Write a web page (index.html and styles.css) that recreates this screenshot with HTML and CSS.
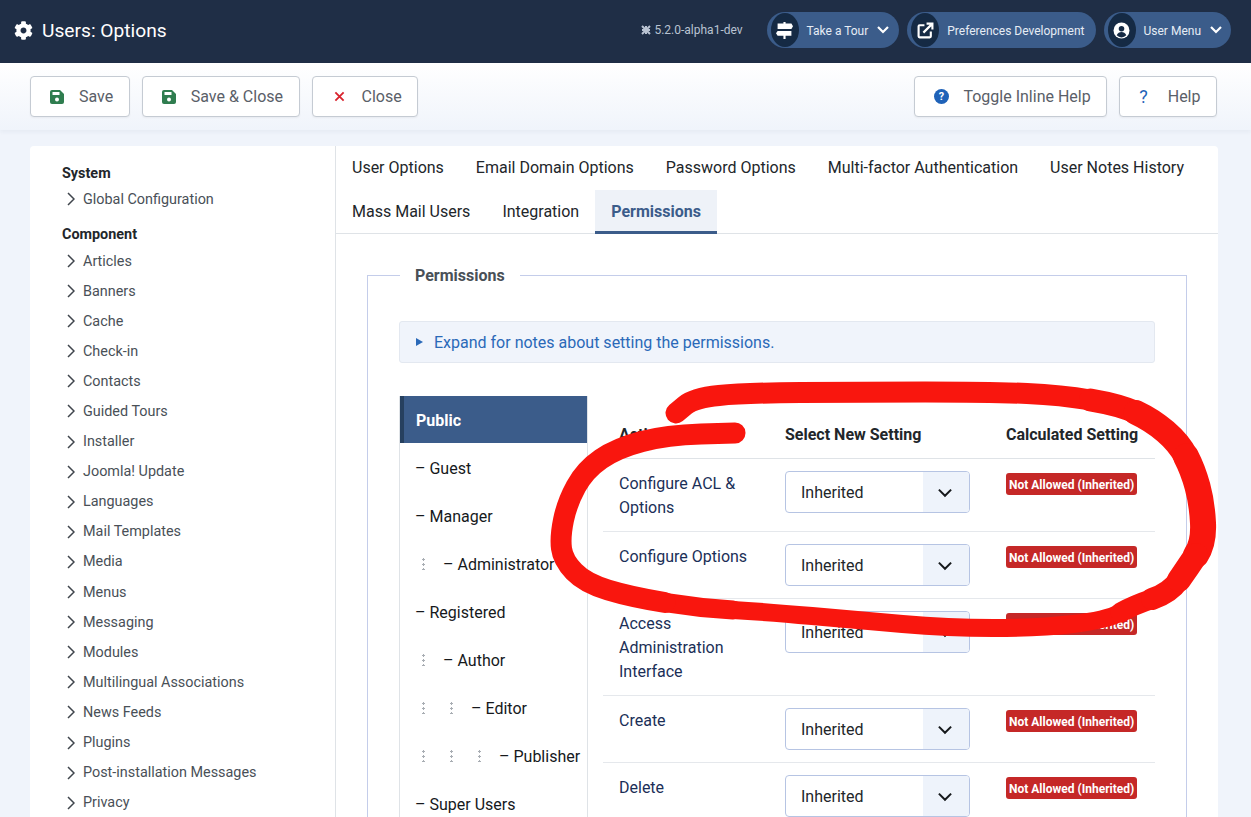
FILE: index.html
```html
<!DOCTYPE html>
<html lang="en">
<head>
<meta charset="utf-8">
<title>Users: Options</title>
<link rel="stylesheet" href="styles.css">
</head>
<body>
<header class="header">
  <div class="brand">
    <svg class="gear" viewBox="0 0 512 512"><path d="M487.4 315.7l-42.6-24.6c4.3-23.2 4.3-47 0-70.2l42.6-24.6c4.9-2.8 7.1-8.6 5.5-14-11.1-35.6-30-67.8-54.7-94.6-3.8-4.1-10-5.1-14.8-2.3L380.8 110c-17.9-15.4-38.5-27.3-60.8-35.1V25.8c0-5.6-3.9-10.5-9.4-11.7-36.7-8.2-74.3-7.8-109.2 0-5.5 1.2-9.4 6.1-9.4 11.7V75c-22.2 7.9-42.8 19.8-60.8 35.1L88.7 85.5c-4.9-2.8-11-1.9-14.8 2.3-24.7 26.7-43.6 58.9-54.7 94.6-1.7 5.4.6 11.2 5.5 14L67.3 221c-4.3 23.2-4.3 47 0 70.2l-42.6 24.6c-4.9 2.8-7.1 8.6-5.5 14 11.1 35.6 30 67.8 54.7 94.6 3.8 4.1 10 5.1 14.8 2.3l42.6-24.6c17.9 15.4 38.5 27.3 60.8 35.1v49.2c0 5.6 3.9 10.5 9.4 11.7 36.7 8.2 74.3 7.8 109.2 0 5.5-1.2 9.4-6.1 9.4-11.7v-49.2c22.2-7.9 42.8-19.8 60.8-35.1l42.6 24.6c4.9 2.8 11 1.9 14.8-2.3 24.7-26.7 43.6-58.9 54.7-94.6 1.5-5.5-.7-11.3-5.6-14.1zM256 336c-44.1 0-80-35.9-80-80s35.9-80 80-80 80 35.9 80 80-35.9 80-80 80z"/></svg>
    <span class="brand-title">Users: Options</span>
  </div>
  <div class="header-right">
    <span class="version">
      <svg class="jlogo" viewBox="0 0 12 12"><path d="M2 2l8 8M10 2l-8 8M2 6h8M6 2v8" stroke="#b9c3d2" stroke-width="2" fill="none"/></svg>5.2.0-alpha1-dev
    </span>
    <div class="pill">
      <span class="pill-icon"><svg viewBox="0 0 16 16" class="pi"><path d="M7 0h2v1.500h5.500l1.500 2.500-1.500 2.500H1.500V1.500H7zM1.500 8.500H14.500v4.500H9v3H7v-3H1.500L0 10.700z" fill="#fff"/></svg></span>
      <span class="pill-text">Take a Tour</span>
      <svg class="pill-chev" viewBox="0 0 14 10"><path d="M2 2l5 5 5-5" stroke="#fff" stroke-width="2.200" fill="none"/></svg>
    </div>
    <div class="pill pill-plain">
      <span class="pill-icon"><svg viewBox="0 0 16 16" class="pi"><path d="M7 3H2.500A1 1 0 0 0 1.500 4v9.500a1 1 0 0 0 1 1H12a1 1 0 0 0 1-1V9" stroke="#fff" stroke-width="2" fill="none"/><path d="M6 10l8-8M9 1.500h5.500V7" stroke="#fff" stroke-width="2" fill="none"/></svg></span>
      <span class="pill-text">Preferences Development</span>
    </div>
    <div class="pill pill-user">
      <span class="pill-icon"><svg viewBox="0 0 16 16" class="pi"><circle cx="8" cy="8" r="7.500" fill="#fff"/><circle cx="8" cy="6.300" r="2.600" fill="#152a44"/><path d="M3.500 12.500c1-2.300 2.500-3 4.500-3s3.500.7 4.500 3A6 6 0 0 1 3.500 12.500z" fill="#152a44"/></svg></span>
      <span class="pill-text">User Menu</span>
      <svg class="pill-chev" viewBox="0 0 14 10"><path d="M2 2l5 5 5-5" stroke="#fff" stroke-width="2.200" fill="none"/></svg>
    </div>
  </div>
</header>

<div class="toolbar">
  <div class="btn-group">
    <button class="btn"><svg class="ic" viewBox="0 0 14 14"><path d="M2 0h8l4 4v8a2 2 0 0 1-2 2H2a2 2 0 0 1-2-2V2a2 2 0 0 1 2-2z" fill="#2f7d4f"/><rect x="2.500" y="2" width="7" height="3" fill="#fff"/><circle cx="7" cy="9.500" r="2" fill="#fff"/></svg>Save</button>
    <button class="btn"><svg class="ic" viewBox="0 0 14 14"><path d="M2 0h8l4 4v8a2 2 0 0 1-2 2H2a2 2 0 0 1-2-2V2a2 2 0 0 1 2-2z" fill="#2f7d4f"/><rect x="2.500" y="2" width="7" height="3" fill="#fff"/><circle cx="7" cy="9.500" r="2" fill="#fff"/></svg>Save &amp; Close</button>
    <button class="btn"><svg class="ic ic-x" viewBox="0 0 12 12"><path d="M1.500 1.500l9 9M10.500 1.500l-9 9" stroke="#d9232e" stroke-width="2" fill="none"/></svg>Close</button>
  </div>
  <div class="btn-group">
    <button class="btn"><svg class="ic ic-help" viewBox="0 0 14 14"><circle cx="7" cy="7" r="7" fill="#1f62b8"/><text x="7" y="10.500" class="q-mini">?</text></svg>Toggle Inline Help</button>
    <button class="btn"><span class="q">?</span>Help</button>
  </div>
</div>

<main class="main">
  <nav class="sidebar">
    <h4 class="side-head">System</h4>
    <ul class="side-list">
      <li><svg class="chev" viewBox="0 0 8 14"><path d="M1 1l6 6-6 6" /></svg>Global Configuration</li>
    </ul>
    <h4 class="side-head side-head-2">Component</h4>
    <ul class="side-list side-list-2">
      <li><svg class="chev" viewBox="0 0 8 14"><path d="M1 1l6 6-6 6" /></svg>Articles</li>
      <li><svg class="chev" viewBox="0 0 8 14"><path d="M1 1l6 6-6 6" /></svg>Banners</li>
      <li><svg class="chev" viewBox="0 0 8 14"><path d="M1 1l6 6-6 6" /></svg>Cache</li>
      <li><svg class="chev" viewBox="0 0 8 14"><path d="M1 1l6 6-6 6" /></svg>Check-in</li>
      <li><svg class="chev" viewBox="0 0 8 14"><path d="M1 1l6 6-6 6" /></svg>Contacts</li>
      <li><svg class="chev" viewBox="0 0 8 14"><path d="M1 1l6 6-6 6" /></svg>Guided Tours</li>
      <li><svg class="chev" viewBox="0 0 8 14"><path d="M1 1l6 6-6 6" /></svg>Installer</li>
      <li><svg class="chev" viewBox="0 0 8 14"><path d="M1 1l6 6-6 6" /></svg>Joomla! Update</li>
      <li><svg class="chev" viewBox="0 0 8 14"><path d="M1 1l6 6-6 6" /></svg>Languages</li>
      <li><svg class="chev" viewBox="0 0 8 14"><path d="M1 1l6 6-6 6" /></svg>Mail Templates</li>
      <li><svg class="chev" viewBox="0 0 8 14"><path d="M1 1l6 6-6 6" /></svg>Media</li>
      <li><svg class="chev" viewBox="0 0 8 14"><path d="M1 1l6 6-6 6" /></svg>Menus</li>
      <li><svg class="chev" viewBox="0 0 8 14"><path d="M1 1l6 6-6 6" /></svg>Messaging</li>
      <li><svg class="chev" viewBox="0 0 8 14"><path d="M1 1l6 6-6 6" /></svg>Modules</li>
      <li><svg class="chev" viewBox="0 0 8 14"><path d="M1 1l6 6-6 6" /></svg>Multilingual Associations</li>
      <li><svg class="chev" viewBox="0 0 8 14"><path d="M1 1l6 6-6 6" /></svg>News Feeds</li>
      <li><svg class="chev" viewBox="0 0 8 14"><path d="M1 1l6 6-6 6" /></svg>Plugins</li>
      <li><svg class="chev" viewBox="0 0 8 14"><path d="M1 1l6 6-6 6" /></svg>Post-installation Messages</li>
      <li><svg class="chev" viewBox="0 0 8 14"><path d="M1 1l6 6-6 6" /></svg>Privacy</li>
    </ul>
  </nav>

  <section class="content">
    <div class="tabs">
      <div class="tab-row">
        <span class="tab">User Options</span>
        <span class="tab">Email Domain Options</span>
        <span class="tab">Password Options</span>
        <span class="tab">Multi-factor Authentication</span>
        <span class="tab">User Notes History</span>
      </div>
      <div class="tab-row">
        <span class="tab">Mass Mail Users</span>
        <span class="tab">Integration</span>
        <span class="tab tab-active">Permissions</span>
      </div>
    </div>

    <div class="panel">
      <fieldset class="fs">
        <legend class="fs-legend">Permissions</legend>
        <div class="notes"><span class="tri"></span>Expand for notes about setting the permissions.</div>
        <div class="perm">
          <ul class="groups">
            <li class="group group-active">Public</li>
            <li class="group">– Guest</li>
            <li class="group">– Manager</li>
            <li class="group"><span class="dots"></span>– Administrator</li>
            <li class="group">– Registered</li>
            <li class="group"><span class="dots"></span>– Author</li>
            <li class="group"><span class="dots"></span><span class="dots"></span>– Editor</li>
            <li class="group"><span class="dots"></span><span class="dots"></span><span class="dots"></span>– Publisher</li>
            <li class="group">– Super Users</li>
          </ul>
          <table class="ptable">
            <thead>
              <tr><th class="c1">Action</th><th class="c2">Select New Setting</th><th class="c3">Calculated Setting</th></tr>
            </thead>
            <tbody>
              <tr class="r72"><td class="c1">Configure ACL &amp; Options</td><td class="c2"><div class="sel"><span class="sel-v">Inherited</span><span class="sel-a"><svg viewBox="0 0 14 9" class="sel-c"><path d="M1.500 1.500L7 7l5.500-5.500"/></svg></span></div></td><td class="c3"><span class="badge">Not Allowed (Inherited)</span></td></tr>
              <tr class="r67"><td class="c1">Configure Options</td><td class="c2"><div class="sel"><span class="sel-v">Inherited</span><span class="sel-a"><svg viewBox="0 0 14 9" class="sel-c"><path d="M1.500 1.500L7 7l5.500-5.500"/></svg></span></div></td><td class="c3"><span class="badge">Not Allowed (Inherited)</span></td></tr>
              <tr><td class="c1">Access Administration Interface</td><td class="c2"><div class="sel"><span class="sel-v">Inherited</span><span class="sel-a"><svg viewBox="0 0 14 9" class="sel-c"><path d="M1.500 1.500L7 7l5.500-5.500"/></svg></span></div></td><td class="c3"><span class="badge">Not Allowed (Inherited)</span></td></tr>
              <tr class="r67"><td class="c1">Create</td><td class="c2"><div class="sel"><span class="sel-v">Inherited</span><span class="sel-a"><svg viewBox="0 0 14 9" class="sel-c"><path d="M1.500 1.500L7 7l5.500-5.500"/></svg></span></div></td><td class="c3"><span class="badge">Not Allowed (Inherited)</span></td></tr>
              <tr class="r67"><td class="c1">Delete</td><td class="c2"><div class="sel"><span class="sel-v">Inherited</span><span class="sel-a"><svg viewBox="0 0 14 9" class="sel-c"><path d="M1.500 1.500L7 7l5.500-5.500"/></svg></span></div></td><td class="c3"><span class="badge">Not Allowed (Inherited)</span></td></tr>
            </tbody>
          </table>
        </div>
      </fieldset>
    </div>
  </section>
</main>

<svg class="scribble" viewBox="0 0 1251 817">
  <path class="s-18" d="M1120.500 612.500Q1107 620 1073 624Q1039 628 993.500 628Q948 628 902.500 624Q857 620 812 616Q767 612 733 610"/>
  <path class="s-19" d="M733 610Q699 608 665 602.500"/>
  <path class="s-20" d="M1152 599Q1134 605 1120.500 612.500"/>
  <path class="s-22" d="M1179 580Q1170 593 1152 599"/>
  <path class="s-21" d="M676 413L685 405.500Q694 398 719 395.500Q744 393 800.500 392.500Q857 392 925 392Q993 392 1027 393.500Q1061 395 1090.500 400"/>
  <path class="s-23" d="M1090.500 400Q1120 405 1136 412.500"/>
  <path class="s-25" d="M1136 412.500Q1152 420 1165.500 431.500Q1179 443 1186 456.500"/>
  <path class="s-26" d="M1186 456.500Q1193 470 1197.500 486.500Q1202 503 1203 523Q1204 543 1196 555"/>
  <path class="s-24" d="M1196 555Q1188 567 1179 580"/>
  <path class="s-21" d="M665 602.500Q631 597 608 590Q585 583 574 571.500Q563 560 561.500 548.500Q560 537 563.500 520Q567 503 576 486.500Q585 470 601 459Q617 448 642 441.500Q667 435 701 434L735 433"/>
</svg>
</body>
</html>
```

FILE: styles.css
```css
* { box-sizing: border-box; }
html, body { margin: 0; padding: 0; }
body {
  position: relative;
  width: 1251px;
  height: 817px;
  overflow: hidden;
  background: #f0f4fb;
  font-family: Roboto, "Liberation Sans", sans-serif;
  font-size: 16px;
  color: #22262a;
}
ul { list-style: none; margin: 0; padding: 0; }

.header {
  height: 63px;
  background: #1f2e46;
  display: flex;
  align-items: center;
  justify-content: space-between;
  padding: 0 20px 3px 14px;
}
.brand { display: flex; align-items: center; gap: 9px; }
.gear { width: 19px; height: 19px; fill: #fff; }
.brand-title { color: #fff; font-size: 19.200px; }
.header-right { display: flex; align-items: center; gap: 8px; }
.version { display: flex; align-items: center; gap: 2px; color: #b9c3d2; font-size: 12px; margin-right: 16px; }
.jlogo { width: 12px; height: 12px; }
.pill {
  height: 36px;
  border-radius: 18px;
  background: #3b5c8a;
  display: flex;
  align-items: center;
  padding-right: 9px;
}
.pill-plain { padding-right: 11px; }
.pill-user { padding-right: 8px; }
.pill-icon {
  width: 28px;
  height: 34px;
  margin-left: 4px;
  border-radius: 50%;
  background: #152a44;
  display: flex;
  align-items: center;
  justify-content: center;
}
.pi { width: 17px; height: 17px; }
.pill-text { color: #e6ecf5; font-size: 12px; margin-left: 8px; padding-top: 1px; }
.pill-chev { width: 14px; height: 10px; margin-left: 8px; }

.toolbar {
  height: 67px;
  padding: 13px 34px 0 30px;
  display: flex;
  justify-content: space-between;
  align-items: flex-start;
  background: linear-gradient(#fff, #f0f4fb);
  box-shadow: 0 2px 4px rgba(30, 50, 90, .05);
}
.btn-group { display: flex; gap: 12px; }
.btn {
  height: 41px;
  display: flex;
  align-items: center;
  background: #fff;
  border: 1px solid #c5cbd3;
  border-radius: 4px;
  padding: 0 15.500px 0 19px;
  font: 16px Roboto, sans-serif;
  color: #5a6068;
  box-shadow: 0 1px 2px rgba(0,0,0,.05);
}
.ic { width: 14px; height: 14px; margin-right: 15px; }
.ic-help { width: 15px; height: 15px; margin-right: 14px; }
.ic-x { width: 11px; height: 11px; margin-left: 2px; margin-right: 17px; }
.q-mini { font: bold 10px Roboto, sans-serif; fill: #fff; text-anchor: middle; }
.q { color: #1f62b8; font-size: 18px; margin-right: 20px; }

.main {
  display: grid;
  grid-template-columns: 305px 883px;
  margin: 16px 0 0 30px;
}
.sidebar {
  background: #fff;
  height: 671px;
  padding: 18px 0 0 32px;
  border-radius: 4px 0 0 0;
}
.side-head { margin: 0; font-size: 14.400px; font-weight: 700; color: #22262a; line-height: 20px; }
.side-head-2 { margin-top: 11px; }
.side-list { font-size: 14.400px; color: #495057; }
.side-list-2 { margin-top: .87px; }
.side-list li { height: 30.100px; display: flex; align-items: center; padding-left: 5px; }
.chev { width: 8px; height: 14px; margin-right: 8px; fill: none; stroke: #3f454c; stroke-width: 1.500; }

.content {
  background: #fff;
  height: 671px;
  border-left: 1px solid #dfe3e7;
  border-radius: 0 4px 0 0;
}
.tabs { height: 88px; border-bottom: 1px solid #dfe3e7; }
.tab-row { display: flex; height: 43.500px; }
.tab {
  padding: 0 16px;
  display: flex;
  align-items: center;
  font-size: 16px;
  color: #22262a;
}
.tab-active {
  color: #3b5c8a;
  font-weight: 700;
  background: #eef2f8;
  border-bottom: 3px solid #3b5c8a;
  padding-top: 3px;
  height: 44px;
}
.panel { padding: 30px 31px 0; }
.fs {
  margin: 0;
  padding: 35px 31px 0;
  border: 1px solid #c4cdea;
  border-radius: 0;
  min-width: 0;
  height: 560px;
}
.fs-legend {
  margin-left: 1px;
  padding: 2px 15px 0;
  font-size: 16px;
  font-weight: 700;
  color: #495057;
  line-height: 20px;
}
.notes {
  height: 42px;
  background: #f0f4fb;
  border: 1px solid #e3e8f0;
  border-radius: 3px;
  display: flex;
  align-items: center;
  padding-left: 16px;
  color: #2a69b8;
  font-size: 16px;
}
.tri {
  width: 0; height: 0;
  border-left: 7px solid #2a69b8;
  border-top: 4px solid transparent;
  border-bottom: 4px solid transparent;
  margin-right: 11px;
}
.perm { display: flex; margin-top: 33px; }
.groups {
  width: 189px;
  flex: none;
  border-left: 1px solid #dfe3e7;
  border-right: 1px solid #dfe3e7;
}
.group {
  height: 48px;
  padding: 2px 0 0 15px;
  display: flex;
  align-items: center;
  font-size: 16px;
  color: #16191c;
  white-space: nowrap;
  overflow: hidden;
}
.group-active {
  height: 47px;
  background: #3b5c8a;
  color: #fff;
  font-weight: 700;
  border-left: 4px solid #26405f;
  padding-left: 12px;
}
.dots {
  width: 28px;
  flex: none;
  height: 12px;
  background: radial-gradient(circle at 1.500px 1.500px, #a8adb3 1px, transparent 1.200px) 7px 0 / 3px 5px repeat-y;
}
.ptable {
  width: 552px;
  margin-left: 15px;
  border-collapse: collapse;
  table-layout: fixed;
  align-self: flex-start;
}
.ptable th {
  height: 62px;
  padding: 15px 0 0;
  text-align: left;
  font-size: 16px;
  font-weight: 700;
  color: #22262a;
  border-bottom: 1px solid #dfe3e7;
  vertical-align: middle;
  white-space: nowrap;
}
.ptable td {
  padding: 12px 0 12px;
  vertical-align: top;
  border-bottom: 1px solid #e5e8ec;
  color: #1b2f57;
  line-height: 24px;
  font-size: 16px;
}
.c1 { width: 182px; padding-left: 16px !important; padding-right: 24px !important; }
.ptable td.c1 { padding-top: 13px; padding-bottom: 11px; }
.c2 { width: 221px; }
.c3 { width: 149px; }
.ptable td.c3 { padding-top: 14px; line-height: 0; }
.r72 { height: 72px; }
.r67 { height: 67px; }
.sel {
  width: 185px;
  height: 42px;
  display: flex;
  border: 1px solid #b6c4e3;
  border-radius: 4px;
  background: #fff;
  overflow: hidden;
}
.sel-v { flex: 1; padding-left: 15px; line-height: 41px; color: #22262a; }
.sel-a { width: 46px; padding: 2px 2px 0 0; background: #eef3fb; display: flex; align-items: center; justify-content: center; }
.sel-c { width: 16px; height: 10px; fill: none; stroke: #16191c; stroke-width: 1.800; }
.badge {
  display: inline-block;
  background: #c52827;
  color: #fff;
  font-size: 12px;
  font-weight: 700;
  line-height: 24px;
  height: 22px;
  padding: 0 3px;
  border-radius: 3px;
  white-space: nowrap;
}
.scribble {
  position: absolute;
  left: 0;
  top: 0;
  width: 1251px;
  height: 817px;
  pointer-events: none;
  fill: none;
  stroke: #f9160e;
  stroke-linecap: round;
  stroke-linejoin: round;
}
.s-18 { stroke-width: 18; }
.s-19 { stroke-width: 19; }
.s-20 { stroke-width: 20; }
.s-21 { stroke-width: 21; }
.s-22 { stroke-width: 22; }
.s-23 { stroke-width: 23; }
.s-24 { stroke-width: 24; }
.s-25 { stroke-width: 25; }
.s-26 { stroke-width: 26; }
```
